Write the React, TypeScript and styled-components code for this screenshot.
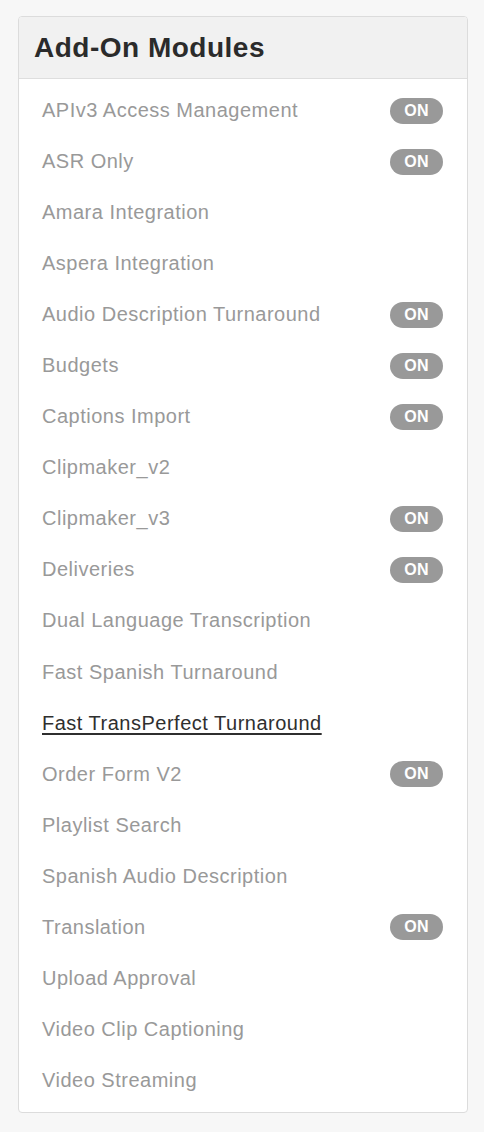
import React from "react";
import styled, { createGlobalStyle } from "styled-components";

const Global = createGlobalStyle`
  html, body { margin: 0; padding: 0; background: #f7f7f7; }
  body { font-family: "Liberation Sans", Arial, sans-serif; }
`;

const Page = styled.div`
  padding: 16px 16px 20px 18px;
`;

const Panel = styled.section`
  width: 448px;
  background: #fff;
  border: 1px solid #dcdcdc;
  border-radius: 4px;
  overflow: hidden;
`;

const Header = styled.header`
  height: 61px;
  background: #f1f1f1;
  border-bottom: 1px solid #dedede;
  display: flex;
  align-items: center;
  padding: 0 15px;
`;

const Title = styled.h2`
  margin: 0;
  font-size: 28px;
  font-weight: 700;
  color: #2b2b2b;
  letter-spacing: 0.5px;
`;

const List = styled.ul`
  list-style: none;
  margin: 0;
  padding: 6px 0 6px;
`;

const Row = styled.li`
  height: 51.05px;
  display: flex;
  align-items: center;
  justify-content: space-between;
  padding: 0 23px 0 23px;
`;

const Name = styled.span<{ $active?: boolean }>`
  font-size: 20px;
  letter-spacing: 0.5px;
  color: ${(p) => (p.$active ? "#2f2f2f" : "#999")};
  text-decoration: ${(p) => (p.$active ? "underline" : "none")};
  text-underline-offset: 3px;
  text-decoration-thickness: 1.5px;
`;

const Badge = styled.span`
  width: 53px;
  height: 26px;
  border-radius: 13px;
  background: #999;
  color: #fff;
  font-weight: 700;
  font-size: 16px;
  letter-spacing: 0.3px;
  display: flex;
  align-items: center;
  justify-content: center;
  margin-right: 1px;
`;

const modules: { name: string; on?: boolean; active?: boolean }[] = [
  { name: "APIv3 Access Management", on: true },
  { name: "ASR Only", on: true },
  { name: "Amara Integration" },
  { name: "Aspera Integration" },
  { name: "Audio Description Turnaround", on: true },
  { name: "Budgets", on: true },
  { name: "Captions Import", on: true },
  { name: "Clipmaker_v2" },
  { name: "Clipmaker_v3", on: true },
  { name: "Deliveries", on: true },
  { name: "Dual Language Transcription" },
  { name: "Fast Spanish Turnaround" },
  { name: "Fast TransPerfect Turnaround", active: true },
  { name: "Order Form V2", on: true },
  { name: "Playlist Search" },
  { name: "Spanish Audio Description" },
  { name: "Translation", on: true },
  { name: "Upload Approval" },
  { name: "Video Clip Captioning" },
  { name: "Video Streaming" },
];

export default function App() {
  return (
    <>
      <Global />
      <Page>
        <Panel>
          <Header>
            <Title>Add-On Modules</Title>
          </Header>
          <List>
            {modules.map((m) => (
              <Row key={m.name}>
                <Name $active={m.active}>{m.name}</Name>
                {m.on && <Badge>ON</Badge>}
              </Row>
            ))}
          </List>
        </Panel>
      </Page>
    </>
  );
}
